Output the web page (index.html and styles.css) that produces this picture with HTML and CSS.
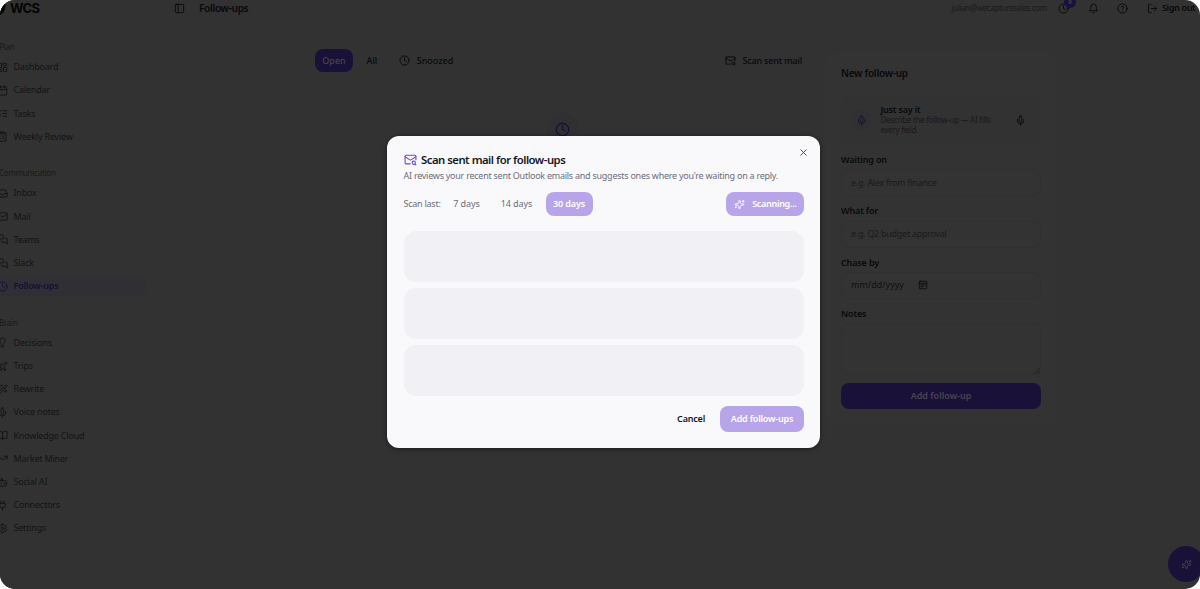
FILE: index.html
```html
<!DOCTYPE html>
<html lang="en">
<head>
    <meta charset="UTF-8">
    <meta name="viewport" content="width=device-width, initial-scale=1.0">
    <title>WCS - Follow-ups</title>
    <link rel="stylesheet" href="styles.css">
</head>
<body>
    <!-- Icon set -->
    <svg class="sprite">
        <symbol id="i-dashboard" viewBox="0 0 24 24"><rect x="3" y="3" width="7" height="9" rx="1"/><rect x="14" y="3" width="7" height="5" rx="1"/><rect x="14" y="12" width="7" height="9" rx="1"/><rect x="3" y="16" width="7" height="5" rx="1"/></symbol>
        <symbol id="i-calendar" viewBox="0 0 24 24"><path d="M8 2v4M16 2v4M3 10h18"/><rect x="3" y="4" width="18" height="18" rx="2"/></symbol>
        <symbol id="i-tasks" viewBox="0 0 24 24"><path d="m3 17 2 2 4-4M3 7l2 2 4-4M13 6h8M13 12h8M13 18h8"/></symbol>
        <symbol id="i-review" viewBox="0 0 24 24"><rect x="8" y="2" width="8" height="4" rx="1"/><path d="M16 4h2a2 2 0 0 1 2 2v14a2 2 0 0 1-2 2H6a2 2 0 0 1-2-2V6a2 2 0 0 1 2-2h2M12 11h4M12 16h4M8 11h.01M8 16h.01"/></symbol>
        <symbol id="i-inbox" viewBox="0 0 24 24"><path d="M22 12h-6l-2 3h-4l-2-3H2"/><path d="M5.45 5.11 2 12v6a2 2 0 0 0 2 2h16a2 2 0 0 0 2-2v-6l-3.45-6.89A2 2 0 0 0 16.76 4H7.24a2 2 0 0 0-1.79 1.11z"/></symbol>
        <symbol id="i-mail" viewBox="0 0 24 24"><rect x="2" y="4" width="20" height="16" rx="2"/><path d="m22 7-8.97 5.7a1.94 1.94 0 0 1-2.06 0L2 7"/></symbol>
        <symbol id="i-chat" viewBox="0 0 24 24"><path d="M14 9a2 2 0 0 1-2 2H6l-4 4V4a2 2 0 0 1 2-2h8a2 2 0 0 1 2 2z"/><path d="M18 9h2a2 2 0 0 1 2 2v11l-4-4h-6a2 2 0 0 1-2-2v-1"/></symbol>
        <symbol id="i-clock" viewBox="0 0 24 24"><circle cx="12" cy="12" r="10"/><path d="M12 6v6l4 2"/></symbol>
        <symbol id="i-bulb" viewBox="0 0 24 24"><path d="M15 14c.2-1 .7-1.7 1.5-2.5 1-.9 1.5-2.2 1.5-3.5A6 6 0 0 0 6 8c0 1 .2 2.2 1.5 3.5.7.7 1.3 1.5 1.5 2.5M9 18h6M10 22h4"/></symbol>
        <symbol id="i-plane" viewBox="0 0 24 24"><path d="M17.8 19.2 16 11l3.5-3.5C21 6 21.5 4 21 3c-1-.5-3 0-4.5 1.5L13 8 4.8 6.2c-.5-.1-.9.1-1.1.5l-.3.5c-.2.5-.1 1 .3 1.3L9 12l-2 3H4l-1 1 3 2 2 3 1-1v-3l3-2 3.5 5.3c.3.4.8.5 1.3.3l.5-.2c.4-.3.6-.7.5-1.2z"/></symbol>
        <symbol id="i-wand" viewBox="0 0 24 24"><path d="m21.64 3.64-1.28-1.28a1.21 1.21 0 0 0-1.72 0L2.36 18.64a1.21 1.21 0 0 0 0 1.72l1.28 1.28a1.2 1.2 0 0 0 1.72 0L21.64 5.36a1.2 1.2 0 0 0 0-1.72M14 7l3 3M5 6v4M19 14v4M10 2v2M7 8H3M21 16h-4M11 3H9"/></symbol>
        <symbol id="i-mic" viewBox="0 0 24 24"><path d="M12 2a3 3 0 0 0-3 3v7a3 3 0 0 0 6 0V5a3 3 0 0 0-3-3Z"/><path d="M19 10v2a7 7 0 0 1-14 0v-2M12 19v3"/></symbol>
        <symbol id="i-book" viewBox="0 0 24 24"><path d="M12 7v14M3 18a1 1 0 0 1-1-1V4a1 1 0 0 1 1-1h5a4 4 0 0 1 4 4 4 4 0 0 1 4-4h5a1 1 0 0 1 1 1v13a1 1 0 0 1-1 1h-6a3 3 0 0 0-3 3 3 3 0 0 0-3-3z"/></symbol>
        <symbol id="i-trend" viewBox="0 0 24 24"><path d="m22 7-8.5 8.5-5-5L2 17M16 7h6v6"/></symbol>
        <symbol id="i-bot" viewBox="0 0 24 24"><path d="M12 8V4H8"/><rect x="4" y="8" width="16" height="12" rx="2"/><path d="M2 14h2M20 14h2M15 13v2M9 13v2"/></symbol>
        <symbol id="i-plug" viewBox="0 0 24 24"><path d="M12 22v-5M9 8V2M15 8V2M18 8v5a4 4 0 0 1-4 4h-4a4 4 0 0 1-4-4V8Z"/></symbol>
        <symbol id="i-gear" viewBox="0 0 24 24"><path d="M12.22 2h-.44a2 2 0 0 0-2 2v.18a2 2 0 0 1-1 1.73l-.43.25a2 2 0 0 1-2 0l-.15-.08a2 2 0 0 0-2.73.73l-.22.38a2 2 0 0 0 .73 2.73l.15.1a2 2 0 0 1 1 1.72v.51a2 2 0 0 1-1 1.74l-.15.09a2 2 0 0 0-.73 2.73l.22.38a2 2 0 0 0 2.73.73l.15-.08a2 2 0 0 1 2 0l.43.25a2 2 0 0 1 1 1.73V20a2 2 0 0 0 2 2h.44a2 2 0 0 0 2-2v-.18a2 2 0 0 1 1-1.73l.43-.25a2 2 0 0 1 2 0l.15.08a2 2 0 0 0 2.73-.73l.22-.39a2 2 0 0 0-.73-2.73l-.15-.08a2 2 0 0 1-1-1.74v-.5a2 2 0 0 1 1-1.74l.15-.09a2 2 0 0 0 .73-2.73l-.22-.38a2 2 0 0 0-2.73-.73l-.15.08a2 2 0 0 1-2 0l-.43-.25a2 2 0 0 1-1-1.73V4a2 2 0 0 0-2-2z"/><circle cx="12" cy="12" r="3"/></symbol>
        <symbol id="i-panel" viewBox="0 0 24 24"><rect x="3" y="3" width="18" height="18" rx="2"/><path d="M9 3v18"/></symbol>
        <symbol id="i-bell" viewBox="0 0 24 24"><path d="M6 8a6 6 0 0 1 12 0c0 7 3 9 3 9H3s3-2 3-9M10.3 21a1.94 1.94 0 0 0 3.4 0"/></symbol>
        <symbol id="i-help" viewBox="0 0 24 24"><circle cx="12" cy="12" r="10"/><path d="M9.09 9a3 3 0 0 1 5.83 1c0 2-3 3-3 3M12 17h.01"/></symbol>
        <symbol id="i-logout" viewBox="0 0 24 24"><path d="M9 21H5a2 2 0 0 1-2-2V5a2 2 0 0 1 2-2h4M16 17l5-5-5-5M21 12H9"/></symbol>
        <symbol id="i-scan" viewBox="0 0 24 24"><path d="M22 12.5V6a2 2 0 0 0-2-2H4a2 2 0 0 0-2 2v12a2 2 0 0 0 2 2h7.5"/><path d="m22 7-8.97 5.7a1.94 1.94 0 0 1-2.06 0L2 7"/><circle cx="18" cy="18" r="3"/><path d="m22 22-1.5-1.5"/></symbol>
        <symbol id="i-sparkles" viewBox="0 0 24 24"><path d="M9.94 15.5A2 2 0 0 0 8.5 14.06l-6.14-1.58a.5.5 0 0 1 0-.96L8.5 9.94A2 2 0 0 0 9.94 8.5l1.58-6.14a.5.5 0 0 1 .96 0l1.58 6.14a2 2 0 0 0 1.44 1.44l6.14 1.58a.5.5 0 0 1 0 .96l-6.14 1.58a2 2 0 0 0-1.44 1.44l-1.58 6.14a.5.5 0 0 1-.96 0zM20 3v4M22 5h-4M4 17v2M5 18H3"/></symbol>
        <symbol id="i-close" viewBox="0 0 24 24"><path d="M18 6 6 18M6 6l12 12"/></symbol>
        <symbol id="i-date" viewBox="0 0 24 24"><rect x="3" y="3" width="18" height="18" rx="2"/><path d="M3 8h18M7 12h10M7 16h6"/></symbol>
    </svg>

    <div class="app">
        <aside class="sidebar">
            <div class="brand">
                <svg class="logo" viewBox="0 0 12 14"><path d="M11 1C5 2 1 5 1 9c0 2 1 4 2 5 5-2 8-6 8-13z"/></svg>
                <span>WCS</span>
            </div>
            <nav>
                <div class="group">
                    <div class="group-label">Plan</div>
                    <a class="item"><svg><use href="#i-dashboard"/></svg><span>Dashboard</span></a>
                    <a class="item"><svg><use href="#i-calendar"/></svg><span>Calendar</span></a>
                    <a class="item"><svg><use href="#i-tasks"/></svg><span>Tasks</span></a>
                    <a class="item"><svg><use href="#i-review"/></svg><span>Weekly Review</span></a>
                </div>
                <div class="group">
                    <div class="group-label">Communication</div>
                    <a class="item"><svg><use href="#i-inbox"/></svg><span>Inbox</span></a>
                    <a class="item"><svg><use href="#i-mail"/></svg><span>Mail</span></a>
                    <a class="item"><svg><use href="#i-chat"/></svg><span>Teams</span></a>
                    <a class="item"><svg><use href="#i-chat"/></svg><span>Slack</span></a>
                    <a class="item active"><svg><use href="#i-clock"/></svg><span>Follow-ups</span></a>
                </div>
                <div class="group">
                    <div class="group-label">Brain</div>
                    <a class="item"><svg><use href="#i-bulb"/></svg><span>Decisions</span></a>
                    <a class="item"><svg><use href="#i-plane"/></svg><span>Trips</span></a>
                    <a class="item"><svg><use href="#i-wand"/></svg><span>Rewrite</span></a>
                    <a class="item"><svg><use href="#i-mic"/></svg><span>Voice notes</span></a>
                    <a class="item"><svg><use href="#i-book"/></svg><span>Knowledge Cloud</span></a>
                    <a class="item"><svg><use href="#i-trend"/></svg><span>Market Miner</span></a>
                    <a class="item"><svg><use href="#i-bot"/></svg><span>Social AI</span></a>
                    <a class="item"><svg><use href="#i-plug"/></svg><span>Connectors</span></a>
                    <a class="item"><svg><use href="#i-gear"/></svg><span>Settings</span></a>
                </div>
            </nav>
        </aside>

        <main>
            <header class="topbar">
                <svg><use href="#i-panel"/></svg>
                <h1>Follow-ups</h1>
                <span class="email">julian@wecapturesales.com</span>
                <div class="top-icons">
                    <span class="reminders"><svg><use href="#i-clock"/></svg><b>9</b></span>
                    <svg><use href="#i-bell"/></svg>
                    <svg><use href="#i-help"/></svg>
                </div>
                <svg><use href="#i-logout"/></svg>
                <span class="signout">Sign out</span>
            </header>

            <div class="content">
                <section class="list">
                    <div class="tabs">
                        <span class="tab selected">Open</span>
                        <span class="tab">All</span>
                        <span class="tab snoozed"><svg><use href="#i-clock"/></svg>Snoozed</span>
                        <span class="tab scan"><svg><use href="#i-scan"/></svg>Scan sent mail</span>
                    </div>
                    <div class="empty">
                        <div class="empty-icon"><svg><use href="#i-clock"/></svg></div>
                    </div>
                </section>

                <section class="form">
                    <h2>New follow-up</h2>
                    <div class="voice">
                        <div class="voice-icon"><svg><use href="#i-mic"/></svg></div>
                        <div class="voice-text">
                            <strong>Just say it</strong>
                            <p>Describe the follow-up — AI fills<br>every field.</p>
                        </div>
                        <svg><use href="#i-mic"/></svg>
                    </div>
                    <label>Waiting on</label>
                    <div class="input">e.g. Alex from finance</div>
                    <label>What for</label>
                    <div class="input">e.g. Q2 budget approval</div>
                    <label>Chase by</label>
                    <div class="input date"><span>mm/dd/yyyy</span><svg><use href="#i-date"/></svg></div>
                    <label>Notes</label>
                    <div class="input notes"><svg viewBox="0 0 6 6"><path d="M0 6 6 0M3 6l3-3"/></svg></div>
                    <div class="submit">Add follow-up</div>
                </section>
            </div>
        </main>

        <div class="fab"><svg><use href="#i-sparkles"/></svg></div>

        <div class="dialog">
            <div class="dialog-title">
                <svg><use href="#i-scan"/></svg>
                <h2>Scan sent mail for follow-ups</h2>
                <svg class="close"><use href="#i-close"/></svg>
            </div>
            <p class="desc">AI reviews your recent sent Outlook emails and suggests ones where you're waiting on a reply.</p>
            <div class="range">
                <span class="range-label">Scan last:</span>
                <span class="day">7 days</span>
                <span class="day wide">14 days</span>
                <span class="day on">30 days</span>
                <span class="scanning"><svg><use href="#i-sparkles"/></svg>Scanning...</span>
            </div>
            <div class="skeletons">
                <div></div>
                <div></div>
                <div></div>
            </div>
            <div class="actions">
                <span class="cancel">Cancel</span>
                <span class="add">Add follow-ups</span>
            </div>
        </div>
    </div>
</body>
</html>
```
FILE: styles.css
```css
* {
    box-sizing: border-box;
}
body {
    margin: 0;
    background: #fff;
    font-family: "Noto Sans", "Open Sans", sans-serif;
    font-size: 9px;
    line-height: 12px;
    color: #09090b;
}
h1, h2, p {
    margin: 0;
}
svg {
    width: 11px;
    height: 11px;
    flex: none;
    fill: none;
    stroke: currentColor;
    stroke-width: 2;
    stroke-linecap: round;
    stroke-linejoin: round;
}
.sprite {
    display: none;
}
.app {
    position: relative;
    display: flex;
    width: 1200px;
    height: 589px;
    overflow: hidden;
    border-radius: 15px;
    background: #323232; /* page under the modal overlay */
}

/* Sidebar */
.sidebar {
    width: 152px;
    flex: none;
    background: #323232;
}
.brand {
    display: flex;
    align-items: center;
    height: 17px;
    margin-bottom: 24px;
    font: bold 13px/17px Inter, "Liberation Sans", sans-serif;
    letter-spacing: -0.6px;
    color: #050505;
}
.logo {
    width: 12px;
    height: 13px;
    margin: 1px 3px 0 -5px;
    fill: #000;
    stroke: none;
}
.group {
    display: flex;
    flex-direction: column;
    gap: 3.2px;
    margin-bottom: 20.5px;
}
.group-label {
    height: 12px;
    margin-bottom: 1px;
    margin-left: -1px;
    font-size: 8px;
    letter-spacing: -0.25px;
    color: #18181a;
}
.item {
    display: flex;
    align-items: center;
    gap: 5.5px;
    width: 150px;
    height: 20px;
    margin-left: -4px;
    padding-left: 1px;
    border-radius: 8px;
    letter-spacing: -0.2px;
    color: #131315;
}
.item.active {
    background: #303034;
    color: #160f35;
    font-weight: 600;
}

/* Top bar */
main {
    flex: 1;
}
.topbar {
    display: flex;
    align-items: center;
    height: 16px;
    padding-left: 22px;
}
h1 {
    margin-left: 14px;
    font-size: 10.2px;
    font-weight: 600;
    letter-spacing: -0.4px;
}
.email {
    margin-left: auto;
    font-size: 8px;
    letter-spacing: -0.35px;
    color: #1a1a1c;
}
.top-icons {
    display: flex;
    gap: 18.5px;
    margin: 0 19px 0 11px;
}
.reminders {
    position: relative;
    height: 11px;
}
.reminders b {
    position: absolute;
    top: -7px;
    left: 6px;
    width: 12px;
    height: 12px;
    border-radius: 6px;
    background: #1b1140;
    font-size: 6px;
    text-align: center;
    color: #444;
}
.signout {
    width: 38px;
    margin-left: 4px;
    font-weight: 600;
    letter-spacing: -0.35px;
    white-space: nowrap;
}

/* Follow-up list */
.content {
    display: flex;
    align-items: flex-start;
    gap: 17px;
    padding: 33px 0 0 163px;
}
.list {
    width: 493px;
}
.tabs {
    display: flex;
    align-items: center;
    height: 23px;
    font-weight: 500;
}
.tab {
    display: flex;
    align-items: center;
    height: 23px;
}
.tab.selected {
    justify-content: center;
    width: 38px;
    margin-right: 13.5px;
    border-radius: 8px;
    background: #1a1139;
    color: #48454f;
}
.tab svg {
    margin-right: 7px;
}
.snoozed {
    margin-left: 21.5px;
}
.scan {
    margin-left: auto;
    margin-right: 6px;
    letter-spacing: -0.18px;
}
.empty {
    display: flex;
    justify-content: center;
    height: 189px;
    margin-top: 12px;
    padding-top: 28px;
    border: 1px solid #313131;
    border-radius: 12px;
    background: #323232;
}
.empty-icon {
    display: flex;
    align-items: center;
    justify-content: center;
    width: 32px;
    height: 32px;
    margin-left: 2px;
    border-radius: 16px;
    background: #303032;
    color: #160f35;
}
.empty-icon svg {
    width: 15px;
    height: 15px;
}

/* New follow-up form */
.form {
    width: 232px;
    margin-top: 2px;
    padding: 15px 16px 16px;
    border-radius: 12px;
    background: #333;
}
.form h2 {
    height: 14px;
    margin-bottom: 15px;
    font-size: 10px;
    line-height: 14px;
    font-weight: 600;
    letter-spacing: -0.25px;
}
.voice {
    display: flex;
    align-items: center;
    height: 50px;
    margin-bottom: 9px;
    padding: 0 15px 0 10px;
    border-radius: 10px;
    background: #323232;
}
.voice-icon {
    display: flex;
    align-items: center;
    justify-content: center;
    width: 20px;
    height: 20px;
    margin-right: 9.5px;
    border-radius: 10px;
    background: #303033;
    color: #160f35;
}
.voice-text {
    flex: 1;
    line-height: 10px;
    white-space: nowrap;
}
.voice-text strong {
    font-weight: 600;
    letter-spacing: -0.2px;
}
.voice-text p {
    font-size: 8px;
    letter-spacing: -0.28px;
    color: #19191b;
}
label {
    display: block;
    height: 12px;
    margin-bottom: 3.3px;
    font-weight: 600;
    letter-spacing: -0.15px;
}
.input {
    display: flex;
    align-items: center;
    height: 27px;
    margin-bottom: 9px;
    padding: 0 9px;
    border: 1px solid #303030;
    border-radius: 8px;
    letter-spacing: -0.28px;
    color: #1a1a1c;
}
.date {
    letter-spacing: 0;
    color: #101012;
}
.date svg {
    width: 10px;
    height: 10px;
    margin-left: 14px;
    color: #0b0b0b;
}
.notes {
    align-items: flex-end;
    justify-content: flex-end;
    height: 52px;
    margin-bottom: 8px;
    padding: 0;
}
.notes svg {
    width: 6px;
    height: 6px;
    stroke-width: 0.7;
}
.submit {
    height: 26px;
    border-radius: 8px;
    background: #1a1139;
    font-weight: 600;
    line-height: 26px;
    text-align: center;
    color: #48454f;
}

.fab {
    position: absolute;
    left: 1168px;
    top: 546px;
    display: flex;
    align-items: center;
    justify-content: center;
    width: 36px;
    height: 36px;
    border-radius: 18px;
    background: #1a1139;
    color: #48454f;
}

/* Scan dialog */
.dialog {
    position: absolute;
    left: 387px;
    top: 136px;
    width: 433px;
    height: 312px;
    padding: 16px 16px 16px 16.5px;
    border-radius: 12px;
    background: #f9f9fc;
    box-shadow: 0 1px 5px rgba(0, 0, 0, 0.5);
    color: #17171f;
}
.dialog-title {
    display: flex;
    align-items: center;
    height: 15px;
}
.dialog-title svg {
    width: 13px;
    height: 13px;
    color: #7047d9;
}
.dialog-title h2 {
    margin-left: 4.5px;
    font-size: 11.3px;
    line-height: 14px;
    font-weight: 600;
    letter-spacing: -0.49px;
}
.dialog-title .close {
    width: 11px;
    height: 11px;
    margin: -14px -5px 0 auto;
    color: #444449;
}
.desc {
    margin-top: 3px;
    white-space: nowrap;
    letter-spacing: -0.255px;
    color: #6d6d78;
}
.range {
    display: flex;
    align-items: center;
    height: 24px;
    margin-top: 10px;
    color: #6d6d78;
}
.range-label {
    width: 39px;
    letter-spacing: -0.25px;
    white-space: nowrap;
}
.day {
    width: 42px;
    margin-left: 3px;
    text-align: center;
    letter-spacing: -0.1px;
}
.day.wide {
    width: 46px;
    margin-left: 6px;
}
.day.on {
    width: 47px;
    height: 24px;
    margin-left: 6px;
    border-radius: 8px;
    background: #b8a5e9;
    line-height: 24px;
    font-weight: 600;
    color: #fff;
}
.scanning {
    display: flex;
    align-items: center;
    justify-content: space-between;
    width: 78px;
    height: 24px;
    margin-left: auto;
    padding: 0 7.5px;
    border-radius: 8px;
    background: #b8a5e9;
    font-weight: 600;
    letter-spacing: -0.3px;
    color: #fff;
}
.skeletons {
    display: flex;
    flex-direction: column;
    gap: 6px;
    margin-top: 15px;
}
.skeletons div {
    height: 51px;
    border-radius: 12px;
    background: #f1f1f5;
}
.actions {
    display: flex;
    align-items: center;
    justify-content: flex-end;
    gap: 15px;
    height: 26px;
    margin-top: 10px;
    font-weight: 600;
    letter-spacing: -0.2px;
}
.add {
    width: 84px;
    height: 26px;
    border-radius: 8px;
    background: #b8a5e9;
    line-height: 26px;
    text-align: center;
    color: #fff;
}
```
